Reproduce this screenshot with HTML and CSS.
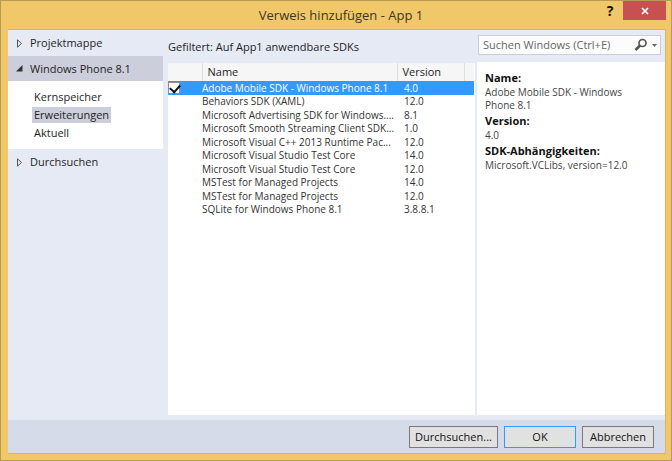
FILE: index.html
```html
<!DOCTYPE html>
<html lang="de">
<head>
<meta charset="utf-8">
<title>Verweis hinzufügen - App 1</title>
<link rel="stylesheet" href="styles.css">
</head>
<body>
<div class="window">
  <header class="titlebar">
    <h1 class="title">Verweis hinzufügen - App 1</h1>
    <div class="window-controls">
      <button class="help" type="button" aria-label="Hilfe">?</button>
      <button class="close" type="button" aria-label="Schließen">
        <svg width="8" height="8" viewBox="0 0 8 8" aria-hidden="true"><path d="M1 1L7 7M7 1L1 7" stroke="#fff" stroke-width="1.7"/></svg>
      </button>
    </div>
  </header>
  <div class="client">
    <main class="content">
      <nav class="sidebar">
        <button class="group" type="button">
          <svg class="arrow" width="7" height="9" viewBox="0 0 7 9" aria-hidden="true"><path d="M1.500 .8V8.200L5.500 4.500Z" fill="none" stroke="#555"/></svg>Projektmappe
        </button>
        <button class="group group-open" type="button">
          <svg class="arrow" width="7" height="9" viewBox="0 0 7 9" aria-hidden="true"><path d="M6.500 1V7.500H0Z" fill="#333"/></svg>Windows Phone 8.1
        </button>
        <ul class="items">
          <li><a class="item" href="#kernspeicher">Kernspeicher</a></li>
          <li><a class="item item-current" href="#erweiterungen">Erweiterungen</a></li>
          <li><a class="item" href="#aktuell">Aktuell</a></li>
        </ul>
        <button class="group" type="button">
          <svg class="arrow" width="7" height="9" viewBox="0 0 7 9" aria-hidden="true"><path d="M1.500 .8V8.200L5.500 4.500Z" fill="none" stroke="#555"/></svg>Durchsuchen
        </button>
      </nav>
      <section class="list-pane">
        <p class="filter">Gefiltert: Auf App1 anwendbare SDKs</p>
        <div class="list">
          <table class="sdks">
            <colgroup><col class="col-check"><col class="col-name"><col class="col-version"><col class="col-rest"></colgroup>
            <thead><tr><th></th><th>Name</th><th>Version</th><th></th></tr></thead>
            <tbody>
              <tr class="selected"><td><input class="check" type="checkbox" checked aria-label="Adobe Mobile SDK - Windows Phone 8.1"></td><td>Adobe Mobile SDK - Windows Phone 8.1</td><td>4.0</td><td></td></tr>
              <tr><td></td><td>Behaviors SDK (XAML)</td><td>12.0</td><td></td></tr>
              <tr><td></td><td>Microsoft Advertising SDK for Windows....</td><td>8.1</td><td></td></tr>
              <tr><td></td><td>Microsoft Smooth Streaming Client SDK...</td><td>1.0</td><td></td></tr>
              <tr><td></td><td>Microsoft Visual C++ 2013 Runtime Pac...</td><td>12.0</td><td></td></tr>
              <tr><td></td><td>Microsoft Visual Studio Test Core</td><td>14.0</td><td></td></tr>
              <tr><td></td><td>Microsoft Visual Studio Test Core</td><td>12.0</td><td></td></tr>
              <tr><td></td><td>MSTest for Managed Projects</td><td>14.0</td><td></td></tr>
              <tr><td></td><td>MSTest for Managed Projects</td><td>12.0</td><td></td></tr>
              <tr><td></td><td>SQLite for Windows Phone 8.1</td><td>3.8.8.1</td><td></td></tr>
            </tbody>
          </table>
        </div>
      </section>
      <aside class="side">
        <div class="search">
          <input class="search-input" type="text" placeholder="Suchen Windows (Ctrl+E)" aria-label="Suchen Windows">
          <button class="search-button" type="button" aria-label="Suchen">
            <svg width="24" height="14" viewBox="0 0 24 14" aria-hidden="true"><circle cx="8.500" cy="5" r="3.500" fill="none" stroke="#555" stroke-width="1.700"/><path d="M6 7.500L1.500 12" stroke="#555" stroke-width="2.600"/><path d="M18 6H23L20.500 9Z" fill="#666"/></svg>
          </button>
        </div>
        <dl class="details">
          <dt>Name:</dt><dd>Adobe Mobile SDK - Windows Phone 8.1</dd>
          <dt>Version:</dt><dd>4.0</dd>
          <dt>SDK-Abhängigkeiten:</dt><dd>Microsoft.VCLibs, version=12.0</dd>
        </dl>
      </aside>
    </main>
    <footer class="footer">
      <button class="button button-wide" type="button">Durchsuchen...</button>
      <button class="button button-default" type="button">OK</button>
      <button class="button" type="button">Abbrechen</button>
    </footer>
  </div>
</div>
</body>
</html>
```
FILE: styles.css
```css
* { box-sizing: border-box; }
body {
  margin: 0;
  font: 11px/16px "Open Sans", "Noto Sans", sans-serif;
  color: #1e1e1e;
}
button, input { font: inherit; color: inherit; }
button { padding: 0; border: 0; background: none; }
.window {
  display: flex;
  flex-direction: column;
  min-height: 100vh;
  padding: 0 5px 6px 7px;
  border: 1px solid #b99b53;
  background: #f0c869;
}
.titlebar {
  display: grid;
  grid-template-columns: 1fr auto 1fr;
  height: 28px;
}
.title {
  grid-column: 2;
  margin: 0;
  padding-left: 8px;
  font-size: 13px;
  line-height: 28px;
  font-weight: 400;
  color: #3f3623;
}
.window-controls { display: flex; justify-content: flex-end; }
.help { width: 24px; height: 20px; margin-right: 1px; font-size: 14px; font-weight: 700; color: #111; }
.close {
  display: flex;
  align-items: center;
  justify-content: center;
  width: 43px;
  height: 19px;
  background: #c75050;
}
.client {
  display: flex;
  flex: 1;
  flex-direction: column;
  border: 1px solid #d9b762;
  border-left-width: 0;
  background: #e6eaf5;
}
.content { display: flex; flex: 1; padding-bottom: 5px; }
.sidebar { flex: 0 0 155px; }
.group {
  display: flex;
  align-items: center;
  gap: 7px;
  width: 100%;
  height: 26px;
  padding-left: 8px;
}
.group-open { height: 25px; background: #cccedb; }
.items {
  display: flex;
  flex-direction: column;
  gap: 2px;
  height: 68px;
  margin: 0;
  padding: 8px 0 0 24px;
  list-style: none;
  background: #fff;
}
.item { display: inline-block; padding: 0 2px; line-height: 16px; color: inherit; text-decoration: none; }
.item-current { background: #cccedb; }
.list-pane { display: flex; flex: 1; flex-direction: column; padding-left: 5px; }
.filter { margin: 0; height: 33px; padding-top: 9px; }
.list { flex: 1; padding-right: 1px; background: #fff; }
.sdks { width: 100%; table-layout: fixed; border-collapse: collapse; }
.col-check { width: 34px; }
.col-version { width: 67px; }
.col-rest { width: 10px; }
th, td { padding: 0; text-align: left; white-space: nowrap; }
th {
  height: 18px;
  padding-left: 5px;
  border-right: 1px solid #dcdde6;
  background: #f6f6f6;
  font-weight: 400;
  line-height: 16px;
}
th:last-child { border-right: 0; }
td { height: 13px; font-size: 10px; line-height: 13px; color: #333; }
tbody tr:nth-child(odd) td { height: 14px; }
td:nth-child(3) { padding-left: 7px; }
.selected td { background: #3399ff; color: #fff; }
.check {
  appearance: none;
  display: block;
  width: 12px;
  height: 12px;
  margin: 0;
  border: 1px solid #8a8f99;
  background: #fff;
}
.check:checked::before {
  content: "";
  display: block;
  width: 8px;
  height: 5px;
  margin: 1px;
  border: solid #111;
  border-width: 0 0 2px 2px;
  transform: rotate(-48deg);
}
.side {
  display: flex;
  flex: 0 0 188px;
  flex-direction: column;
  min-width: 0;
  margin-left: 2px;
}
.search {
  display: flex;
  align-items: center;
  height: 20px;
  margin: 5px 4px 7px 1px;
  border: 1px solid #cccedb;
  background: #fcfcfd;
}
.search-input { flex: 1; min-width: 0; padding: 0 4px; border: 0; outline: 0; background: none; }
.search-input::placeholder { color: #666; opacity: 1; }
.search-button { display: flex; margin-right: 2px; }
.details { flex: 1; margin: 0; padding: 7px 24px 0 8px; background: #fff; }
dt { font-weight: 700; line-height: 17px; color: #111; }
dd { margin: 0; font-size: 10px; line-height: 13px; color: #444; }
.footer {
  display: flex;
  justify-content: flex-end;
  gap: 6px;
  padding: 6px 11px 5px;
  background: #d6dbe9;
}
.button {
  width: 72px;
  height: 22px;
  border: 1px solid #7a7a7a;
  background: #e1e1e1;
  color: #111;
}
.button-wide { width: 89px; }
.button-default { border-color: #3399ff; }
```
